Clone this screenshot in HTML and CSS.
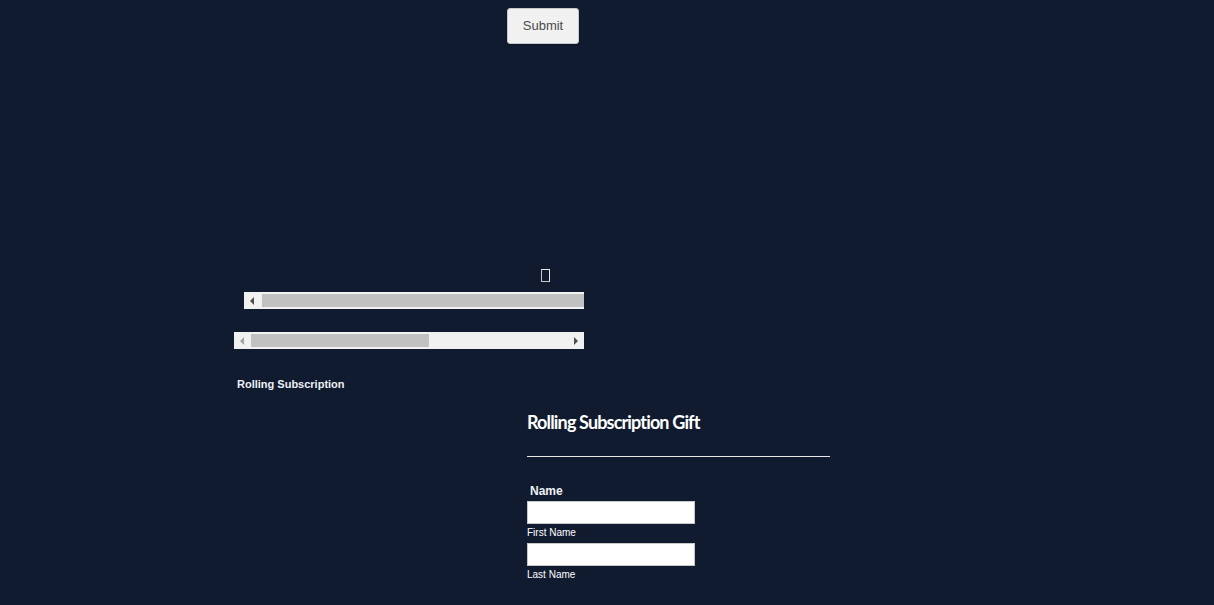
FILE: index.html
```html
<!DOCTYPE html>
<html>
<head>
<meta charset="utf-8">
<link rel="stylesheet" href="styles.css">
</head>
<body>
<div class="top">
  <button class="submit" type="button">Submit</button>
</div>
<div class="widget">
  <div class="glyph-row"><span class="glyph"></span></div>
  <div class="scroll scroll-one">
    <span class="arrow arrow-left dark"></span>
    <span class="thumb thumb-one"></span>
  </div>
  <div class="scroll scroll-two">
    <span class="arrow arrow-left faded"></span>
    <span class="thumb thumb-two"></span>
    <span class="fill"></span>
    <span class="arrow arrow-right dark"></span>
  </div>
  <div class="caption">Rolling Subscription</div>
</div>
<form class="gift">
  <h2 class="gift-title">Rolling Subscription Gift</h2>
  <hr class="rule">
  <div class="field-label">Name</div>
  <input class="text-input" type="text">
  <div class="sub-label">First Name</div>
  <input class="text-input" type="text">
  <div class="sub-label">Last Name</div>
</form>
</body>
</html>
```

FILE: styles.css
```css
html, body {
  margin: 0;
  padding: 0;
  background: #111b30;
  height: 100%;
  overflow: hidden;
}
body {
  font-family: "Liberation Sans", Arial, sans-serif;
  color: #fff;
}
.top {
  padding: 8px 0 0 507px;
  height: 36px;
}
.submit {
  display: block;
  width: 72px;
  height: 36px;
  margin: 0;
  padding: 0 0 2px 0;
  background: #f1f1f1;
  border: 1px solid #c9c9c9;
  border-radius: 3px;
  font-family: "Liberation Sans", Arial, sans-serif;
  font-size: 13px;
  color: #4a4a4a;
  box-shadow: 0 1px 1px rgba(0,0,0,0.25);
}
.widget {
  margin: 225px 0 0 234px;
  width: 350px;
}
.glyph-row {
  height: 14px;
  padding-left: 307px;
}
.glyph {
  display: block;
  box-sizing: border-box;
  width: 9px;
  height: 13px;
  border: 1px solid #e6e6e6;
  border-left-color: #c8c8c8;
  border-bottom-color: #c8c8c8;
}
.scroll {
  height: 17px;
  background: #f1f1f1;
  display: flex;
  align-items: center;
}
.scroll-one {
  margin: 9px 0 0 10px;
  width: 340px;
}
.scroll-two {
  margin-top: 23px;
  width: 350px;
}
.arrow {
  width: 0;
  height: 0;
  border-top: 4px solid transparent;
  border-bottom: 4px solid transparent;
  flex: none;
}
.arrow-left {
  border-right: 4px solid #505050;
  margin-left: 6px;
  margin-right: 8px;
}
.arrow-right {
  border-left: 4px solid #505050;
  margin-left: 6px;
  margin-right: 6px;
}
.arrow-left.faded {
  border-right-color: #a3a3a3;
  margin-right: 7px;
}
.thumb {
  height: 13px;
  background: #c1c1c1;
  flex: none;
}
.thumb-one {
  flex: 1;
}
.thumb-two {
  width: 178px;
}
.fill {
  flex: 1;
}
.caption {
  margin-top: 28px;
  padding-left: 3px;
  font-size: 11px;
  font-weight: bold;
  color: #eef0f4;
  line-height: 14px;
}
.gift {
  margin: 20px 0 0 527px;
  width: 303px;
}
.gift-title {
  margin: 0;
  font-family: Lato, "Open Sans", sans-serif;
  font-weight: bold;
  font-size: 18px;
  line-height: 22px;
  letter-spacing: -0.85px;
  color: #fff;
}
.rule {
  margin: 23px 0 0 0;
  border: 0;
  border-top: 1px solid #e8e8e8;
  height: 0;
}
.field-label {
  margin-top: 27px;
  padding-left: 3px;
  font-size: 12px;
  font-weight: bold;
  line-height: 14px;
  color: #eef0f4;
}
.text-input {
  display: block;
  box-sizing: border-box;
  width: 168px;
  height: 23px;
  margin: 3px 0 0 0;
  padding: 0;
  background: #fff;
  border: 1px solid #c8c8c8;
  border-radius: 0;
}
.sub-label {
  font-size: 10px;
  line-height: 12px;
  margin-top: 3px;
  color: #fff;
}
.sub-label + .text-input {
  margin-top: 4px;
}
```
